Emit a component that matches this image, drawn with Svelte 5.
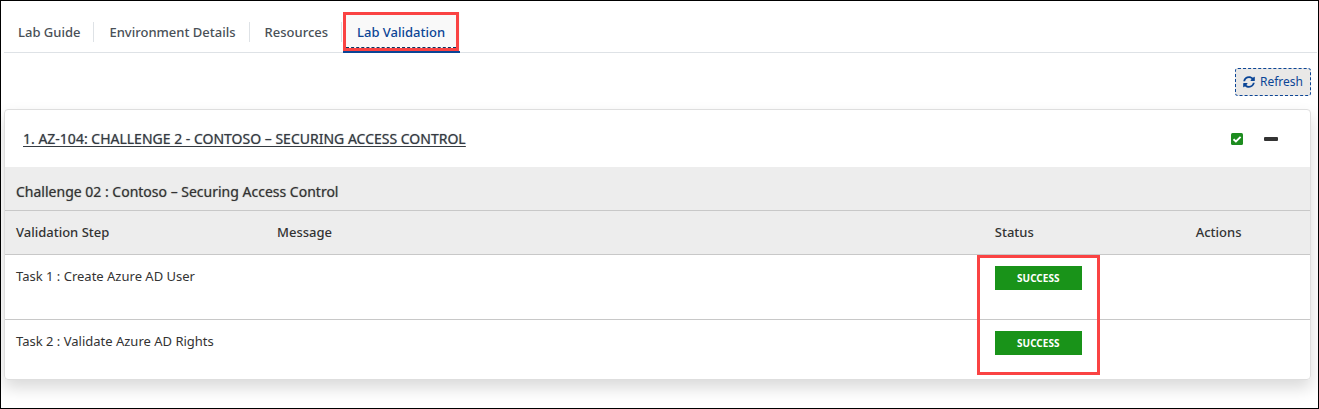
<script>
  const tabs = ['Lab Guide', 'Environment Details', 'Resources', 'Lab Validation'];
  let active = $state('Lab Validation');
  let open = $state(true);
  const steps = [
    { name: 'Task 1 : Create Azure AD User', status: 'SUCCESS' },
    { name: 'Task 2 : Validate Azure AD Rights', status: 'SUCCESS' }
  ];
</script>

<main>
  <nav>
    {#each tabs as tab}
      <button class="tab" class:active={tab === active} onclick={() => (active = tab)}>
        <span>{tab}</span>
      </button>
    {/each}
  </nav>

  <div class="toolbar">
    <button class="refresh">
      <svg viewBox="0 0 512 512" width="12" height="12" aria-hidden="true">
        <path fill="currentColor" d="M370.7 133.3C339.5 104 298.9 88 255.8 88c-77.5.1-144.3 53.2-162.8 126.9-1.3 5.4-6.1 9.1-11.7 9.1H24.1c-7.5 0-13.2-6.8-11.8-14.2C33.9 94.9 134.8 8 256 8c66.4 0 126.8 26.1 171.3 68.7L463 41c15.1-15.1 41-4.4 41 17v134c0 13.3-10.7 24-24 24H346c-21.4 0-32.1-25.9-17-41l41.7-41.7zM32 296h134c21.4 0 32.1 25.9 17 41l-41.8 41.8c31.3 29.3 71.8 45.3 114.9 45.3 77.4-.1 144.3-53.1 162.8-126.8 1.3-5.4 6.1-9.1 11.7-9.1h57.3c7.5 0 13.2 6.8 11.8 14.2C478.1 417.1 377.2 504 256 504c-66.4 0-126.8-26.1-171.3-68.7L49 471c-15.1 15.1-41 4.4-41-17V320c0-13.3 10.7-24 24-24z" />
      </svg>
      Refresh
    </button>
  </div>

  <section class="card">
    <header>
      <a href="#challenge">1. AZ-104: CHALLENGE 2 - CONTOSO – SECURING ACCESS CONTROL</a>
      <svg class="check" viewBox="0 0 12 12" width="12" height="12" aria-hidden="true">
        <rect width="12" height="12" rx="1.5" fill="#1d8c1f" />
        <path d="M2.5 6.2 4.9 8.5 9.6 3.8" fill="none" stroke="#fff" stroke-width="1.9" />
      </svg>
      <button class="toggle" aria-label="Toggle challenge" onclick={() => (open = !open)}>
        <svg viewBox="0 0 14 4" width="14" height="4" aria-hidden="true">
          <rect width="14" height="4" rx="1" fill="#333" />
        </svg>
      </button>
    </header>
    {#if open}
      <table id="challenge">
        <colgroup>
          <col class="step" /><col class="message" /><col class="status" /><col />
        </colgroup>
        <thead>
          <tr class="title"><th colspan="4">Challenge 02 : Contoso – Securing Access Control</th></tr>
          <tr class="labels"><th>Validation Step</th><th>Message</th><th>Status</th><th>Actions</th></tr>
        </thead>
        <tbody>
          {#each steps as step}
            <tr>
              <td>{step.name}</td>
              <td></td>
              <td class="result"><span class="badge">{step.status}</span></td>
              <td></td>
            </tr>
          {/each}
        </tbody>
      </table>
    {/if}
  </section>
</main>

<style>
  main {
    box-sizing: border-box;
    min-height: 100vh;
    padding: 11px 7px 28px 3px;
    border: 1px solid #000;
    overflow: hidden;
    background: #fff;
    color: #333;
    font: 14px/20px "Noto Sans", "Open Sans", sans-serif;
  }
  button {
    font: inherit;
    cursor: pointer;
  }
  nav {
    display: flex;
    height: 40px;
    margin-right: -6px;
    border-bottom: 1px solid #dee2e6;
  }
  .tab {
    position: relative;
    height: 40px;
    padding: 0;
    border: 0;
    background: none;
    color: #495057;
    font-size: 13px;
    font-weight: 500;
  }
  .tab span {
    display: block;
    padding: 0 15px 0 14px;
  }
  .tab:not(.active) {
    padding-right: 1px;
  }
  .tab:not(.active) span {
    margin: 10px 0;
    padding: 0 13px 0 14px;
    border-right: 1px solid #dee2e6;
  }
  .tab.active {
    height: 41px;
    border-bottom: 2px solid #0b4596;
    background: #f9f9f9;
    color: #0b4596;
  }
  .tab.active::after {
    content: "";
    position: absolute;
    inset: 0 1px 0 0;
    border: 3px solid #fa4343;
  }
  .tab.active::before {
    content: "";
    position: absolute;
    inset: auto 4px 3px 3px;
    border-bottom: 1px dashed #0b3560;
  }
  .toolbar {
    display: flex;
    justify-content: flex-end;
    padding: 15px 0 13px;
  }
  .refresh {
    display: flex;
    align-items: center;
    gap: 5px;
    height: 28px;
    padding: 0 7px;
    border: 1px dashed #0b4596;
    border-radius: 3px;
    background: #e9e8e7;
    color: #0b4596;
    font-size: 12px;
  }
  .card {
    border: 1px solid #dedede;
    border-radius: 4px;
    box-shadow: 0 8px 16px rgba(0, 0, 0, 0.15);
    overflow: hidden;
  }
  header {
    display: flex;
    align-items: center;
    height: 57px;
    padding: 0 32px 0 18px;
  }
  header a {
    color: #343a40;
    text-shadow: 0 0 1px #889;
    text-underline-offset: 2px;
  }
  .check {
    margin-left: auto;
  }
  .toggle {
    display: flex;
    margin-left: 21px;
    padding: 0;
    border: 0;
    background: none;
  }
  table {
    width: 100%;
    border-collapse: separate;
    border-spacing: 0;
    table-layout: fixed;
  }
  .step { width: 20%; }
  .message { width: 55%; }
  .status { width: 15.4%; }
  th {
    padding: 11px;
    border-bottom: 1px solid #c8c8c8;
    background: #ededed;
    font-size: 13px;
    font-weight: 500;
    text-align: left;
  }
  .title th {
    padding: 15px 11px 8px;
    font-size: 14px;
    font-weight: 400;
    text-shadow: 0 0 1px #888;
  }
  .labels th {
    padding: 11px 11px 12px;
  }
  td {
    height: 43px;
    padding: 11px 11px 5px;
    font-size: 13px;
    vertical-align: top;
  }
  tbody tr:not(:last-child) td {
    height: 48px;
    border-bottom: 1px solid #c8c8c8;
  }
  .result {
    position: relative;
  }
  .badge {
    display: block;
    width: 87px;
    background: #199319;
    color: #fff;
    font-size: 10px;
    font-weight: 700;
    line-height: 24px;
    text-align: center;
  }
  tbody tr:first-child .result::after {
    content: "";
    position: absolute;
    z-index: 1;
    top: 0;
    left: -7px;
    box-sizing: border-box;
    width: 123px;
    height: 120px;
    border: 3px solid #fa4343;
  }
</style>
